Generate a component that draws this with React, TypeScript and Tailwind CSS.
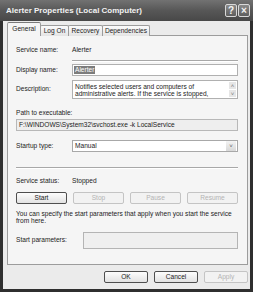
import React from "react";

const tabs = ["General", "Log On", "Recovery", "Dependencies"];
const tabWidths = ["w-[34px]", "w-[29px]", "w-[35px]", "w-[48px]"];

const TitleBtn = ({ children }: { children: React.ReactNode }) => (
  <div className="w-[12px] h-[13px] flex items-center justify-center border border-[#d8d8d8] rounded-[2px] bg-gradient-to-b from-[#8a8a8a] to-[#5e5e5e] text-[#f4f4f4] text-[10px] font-bold leading-none">
    {children}
  </div>
);

const Btn = ({ label, disabled }: { label: string; disabled?: boolean }) => (
  <div
    className={
      "h-[12px] flex items-center justify-center rounded-[2px] border " +
      (disabled
        ? "border-[#c4c4c4] text-[#b4b4b4] bg-[#f2f2f2]"
        : "border-[#4e4e4e] text-[#1c1c1c] bg-gradient-to-b from-[#fdfdfd] to-[#e2e2e2]")
    }
  >
    {label}
  </div>
);

const Label = ({ children }: { children: React.ReactNode }) => (
  <div className="w-[56px] shrink-0">{children}</div>
);

export default function App() {
  return (
    <div className="w-[253px] h-[292px] bg-[#2f2f2f] flex flex-col font-['Liberation_Sans',Arial,sans-serif] text-[6.6px] leading-none text-[#1c1c1c] overflow-hidden">
      {/* title bar */}
      <div className="h-[21px] shrink-0 flex items-center pl-[6px] pr-[3px] bg-gradient-to-b from-[#727272] via-[#575757] to-[#484848]">
        <span className="text-[8px] font-bold text-[#f2f2f2]">Alerter Properties (Local Computer)</span>
        <div className="ml-auto flex gap-[1px]">
          <TitleBtn>?</TitleBtn>
          <TitleBtn>×</TitleBtn>
        </div>
      </div>

      <div className="flex-1 mx-[3px] mb-[3px] bg-[#ebebeb] flex flex-col">
        {/* tabs */}
        <div className="flex items-end pl-[4px] pt-[1px] h-[15px] -mb-px relative z-10">
          {tabs.map((t, i) => (
            <div
              key={t}
              className={
                tabWidths[i] +
                " flex items-center justify-center border border-b-0 border-[#9c9c9c] rounded-t-[2px] " +
                (i === 0
                  ? "h-[14px] bg-[#f5f5f5] border-t-[#7a7a7a]"
                  : "h-[11px] bg-gradient-to-b from-[#fbfbfb] to-[#e4e4e4] -ml-px")
              }
            >
              {t}
            </div>
          ))}
        </div>

        {/* panel */}
        <div className="ml-[4px] mr-[2px] h-[230px] border border-[#9c9c9c] bg-[#f5f5f5] pl-[8px] pr-[9px] flex flex-col">
          <div className="mt-[9px] h-[10px] flex items-center">
            <Label>Service name:</Label>
            <span>Alerter</span>
          </div>
          <div className="mt-[5px] ml-[56px] border-t border-[#a8a8a8] border-b border-b-white" />

          <div className="mt-[2px] flex items-center">
            <Label>Display name:</Label>
            <div className="flex-1 h-[12px] border border-[#b0b0b0] bg-white flex items-center px-[1px]">
              <span className="bg-[#7c7c7c] text-white px-[1px] py-[1px]">Alerter</span>
            </div>
          </div>

          <div className="mt-[4px] flex items-center">
            <Label>Description:</Label>
            <div className="flex-1 h-[19px] border border-[#b0b0b0] bg-white flex">
              <div className="flex-1 pl-[2px] pt-[2px] leading-[7px]">
                Notifies selected users and computers of
                <br />
                administrative alerts. If the service is stopped,
              </div>
              <div className="w-[9px] flex flex-col items-center justify-center gap-[1px] text-[#777] text-[6px]">
                <span className="w-[7px] h-[7px] flex items-center justify-center bg-[#e6e6e6]">˄</span>
                <span className="w-[7px] h-[7px] flex items-center justify-center bg-[#e6e6e6]">˅</span>
              </div>
            </div>
          </div>

          <div className="mt-[10px] h-[8px] flex items-center">Path to executable:</div>
          <div className="mt-[2px] h-[12px] border border-[#b8b8b8] bg-[#eeeeee] flex items-center px-[2px]">
            F:\WINDOWS\System32\svchost.exe -k LocalService
          </div>

          <div className="mt-[9px] flex items-center">
            <Label>Startup type:</Label>
            <div className="flex-1 h-[12px] border border-[#a8a8a8] bg-white flex items-center pl-[2px]">
              <span className="flex-1">Manual</span>
              <span className="w-[10px] h-[10px] mr-[1px] bg-gradient-to-b from-[#f4f4f4] to-[#d8d8d8] flex items-center justify-center text-[#555] text-[6px]">
                ˅
              </span>
            </div>
          </div>

          <div className="mt-[15px] border-t border-[#a8a8a8] border-b border-b-white" />

          <div className="mt-[7px] h-[10px] flex items-center">
            <Label>Service status:</Label>
            <span>Stopped</span>
          </div>

          <div className="mt-[6px] grid grid-cols-4 gap-[6px]">
            <Btn label="Start" />
            <Btn label="Stop" disabled />
            <Btn label="Pause" disabled />
            <Btn label="Resume" disabled />
          </div>

          <div className="mt-[6px] leading-[7px]">
            You can specify the start parameters that apply when you start the service
            <br />
            from here.
          </div>

          <div className="mt-[8px] flex items-center">
            <div className="w-[67px] shrink-0">Start parameters:</div>
            <div className="flex-1 h-[17px] border border-[#b4b4b4] bg-[#efefef]" />
          </div>
        </div>

        {/* bottom buttons */}
        <div className="mt-[6px] mr-[2px] flex justify-end gap-[6px]">
          <div className="w-[44px]">
            <Btn label="OK" />
          </div>
          <div className="w-[44px]">
            <Btn label="Cancel" />
          </div>
          <div className="w-[44px]">
            <Btn label="Apply" disabled />
          </div>
        </div>
      </div>
    </div>
  );
}
